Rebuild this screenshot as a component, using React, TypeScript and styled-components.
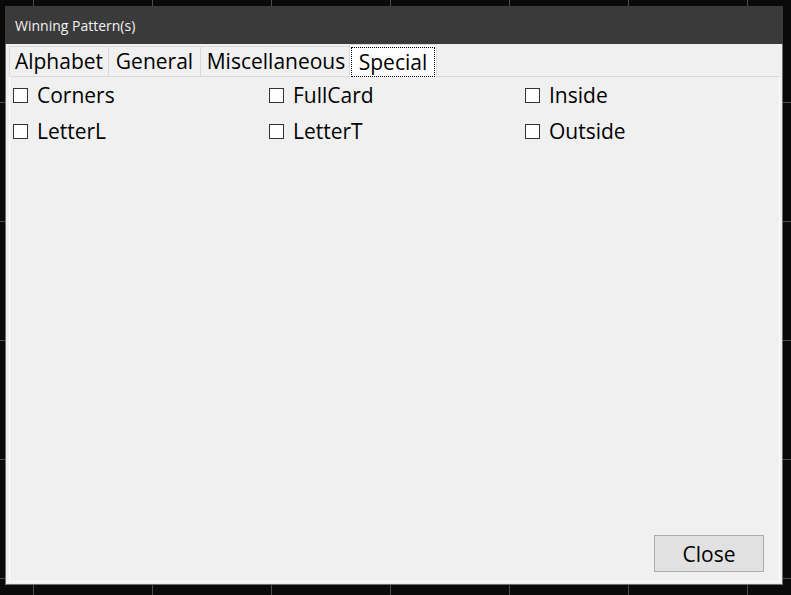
import React from "react";
import styled, { createGlobalStyle } from "styled-components";

const tabs = [
  { label: "Alphabet", width: 100 },
  { label: "General", width: 93 },
  { label: "Miscellaneous", width: 152 },
  { label: "Special", width: 88, active: true },
];
const patterns = ["Corners", "FullCard", "Inside", "LetterL", "LetterT", "Outside"];

const GlobalStyle = createGlobalStyle`
  html, body { margin: 0; padding: 0; }
  body {
    width: 791px;
    height: 595px;
    overflow: hidden;
    background-color: #0a0a0a;
    background-image:
      linear-gradient(to right, #4c4c4c 1px, transparent 1px),
      linear-gradient(to bottom, #4c4c4c 1px, transparent 1px);
    background-size: 119px 119px;
    background-position: 33px 102px;
    font-family: "Open Sans", "Noto Sans", sans-serif;
  }
`;

const Window = styled.div`
  box-sizing: border-box;
  margin: 6px 0 0 5px;
  width: 778px;
  height: 579px;
  display: flex;
  flex-direction: column;
  border: 1px solid #6f6f6f;
  border-top: none;
  background: #f0f0f0;
`;

const TitleBar = styled.div`
  height: 38px;
  margin: 0 -1px;
  padding-left: 10px;
  display: flex;
  align-items: center;
  background: #3a3a3a;
  color: #f2f2f2;
  font-size: 14px;
`;

const Client = styled.div`
  flex: 1;
  display: flex;
  flex-direction: column;
  padding: 0 2px 2px 3px;
`;

const TabStrip = styled.div`
  height: 32px;
  display: flex;
  align-items: flex-end;
  position: relative;
  z-index: 1;
`;

const Tab = styled.div<{ $active?: boolean; $width: number }>`
  box-sizing: border-box;
  width: ${(p) => p.$width}px;
  height: ${(p) => (p.$active ? 33 : 30)}px;
  margin-left: ${(p) => (p.$active ? -3 : -1)}px;
  margin-bottom: ${(p) => (p.$active ? -1 : 0)}px;
  padding: ${(p) => (p.$active ? "1px 1px 0" : "0 0 1px")};
  display: flex;
  align-items: center;
  justify-content: center;
  border: 1px solid #d9d9d9;
  border-bottom: none;
  background: ${(p) => (p.$active ? "#ffffff" : "#f0f0f0")};
  font-size: 21px;
  color: #000;
  &:first-child { margin-left: 0; }
`;

const FocusRing = styled.span`
  box-sizing: border-box;
  width: 100%;
  height: 30px;
  display: flex;
  align-items: center;
  justify-content: center;
  border: 1px dotted #000;
`;

const Panel = styled.div`
  flex: 1;
  display: flex;
  flex-direction: column;
  border: 1px solid #fdfdfd;
  border-top-color: #d9d9d9;
`;

const Grid = styled.div`
  display: grid;
  grid-template-columns: repeat(3, 256px);
  grid-auto-rows: 36px;
  padding-left: 3px;
`;

const CheckItem = styled.label`
  display: flex;
  align-items: center;
  gap: 9px;
  font-size: 21px;
  color: #000;
`;

const Box = styled.span`
  box-sizing: border-box;
  flex: none;
  width: 15px;
  height: 15px;
  border: 1px solid #333;
  background: #fff;
`;

const Footer = styled.div`
  margin-top: auto;
  display: flex;
  justify-content: flex-end;
  padding: 0 15px 9px 0;
`;

const Button = styled.button`
  box-sizing: border-box;
  width: 110px;
  height: 37px;
  border: 1px solid #adadad;
  background: #e1e1e1;
  font-family: inherit;
  font-size: 21px;
  color: #000;
  padding: 0;
`;

const App = () => (
  <>
    <GlobalStyle />
    <Window>
      <TitleBar>Winning Pattern(s)</TitleBar>
      <Client>
        <TabStrip>
          {tabs.map((t) =>
            t.active ? (
              <Tab key={t.label} $width={t.width} $active>
                <FocusRing>{t.label}</FocusRing>
              </Tab>
            ) : (
              <Tab key={t.label} $width={t.width}>
                {t.label}
              </Tab>
            )
          )}
        </TabStrip>
        <Panel>
          <Grid>
            {patterns.map((p) => (
              <CheckItem key={p}>
                <Box />
                {p}
              </CheckItem>
            ))}
          </Grid>
          <Footer>
            <Button>Close</Button>
          </Footer>
        </Panel>
      </Client>
    </Window>
  </>
);

export default App;
